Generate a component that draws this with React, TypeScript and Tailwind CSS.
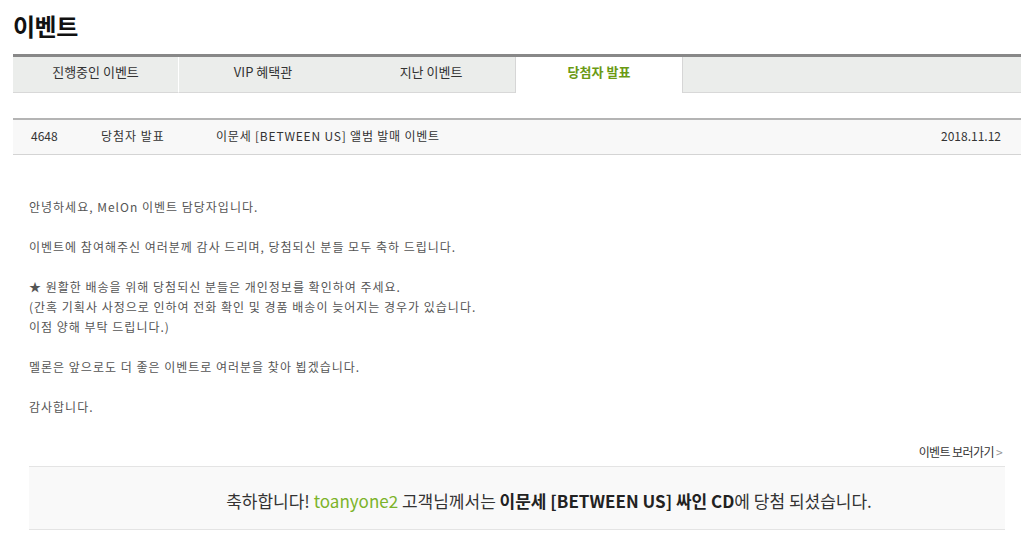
import React from "react";

const tabs = ["진행중인 이벤트", "VIP 혜택관", "지난 이벤트", "당첨자 발표"];

export default function App() {
  return (
    <div className="w-[1022px] h-[560px] bg-white overflow-hidden" style={{ fontFamily: '"Noto Sans CJK KR", "Noto Sans", sans-serif' }}>
      <div className="pl-[13px] pr-[1px]">
        <h1 className="pt-[9px] h-[54px] text-[24px] font-bold text-[#111] leading-[34px] tracking-[-0.5px]">이벤트</h1>
        <div className="flex border-t-[3px] border-[#888] h-[39px]">
          {tabs.map((t, i) => {
            const active = i === 3;
            return (
              <div
                key={t}
                className={
                  active
                    ? "w-[168px] flex items-center justify-center bg-white text-[13px] font-bold text-[#6a9a14] border-l border-r border-[#d6d6d6] pb-[7px]"
                    : i === 0
                    ? "w-[166px] flex items-center justify-center bg-[#ebedeb] text-[13px] text-[#333] border-b border-[#d8d8d8] border-r border-r-white pb-[6px]"
                    : "w-[168px] flex items-center justify-center bg-[#ebedeb] text-[13px] text-[#333] border-b border-[#d8d8d8] pb-[6px]"
                }
              >
                {t}
              </div>
            );
          })}
          <div className="flex-1 bg-[#ebedeb] border-b border-[#d8d8d8]" />
        </div>
        <div className="mt-[25px] border-t-[2px] border-[#b4b4b4] border-b border-b-[#d4d4d4] bg-[#f8f8f8] h-[37px] flex items-center text-[12px] text-[#333] pb-[3px]">
          <span className="pl-[18px] w-[88px]">4648</span>
          <span className="w-[115px] tracking-[1px]">당첨자 발표</span>
          <span className="flex-1 tracking-[0.8px]">이문세 [BETWEEN US] 앨범 발매 이벤트</span>
          <span className="pr-[20px]">2018.11.12</span>
        </div>
        <div className="pl-[16px] pr-[16px]">
          <div className="pt-[42px] text-[12px] leading-[20px] text-[#555] tracking-[1px]">
            <p>안녕하세요, MelOn 이벤트 담당자입니다.</p>
            <p className="mt-[20px]">이벤트에 참여해주신 여러분께 감사 드리며, 당첨되신 분들 모두 축하 드립니다.</p>
            <p className="mt-[20px]">★ 원활한 배송을 위해 당첨되신 분들은 개인정보를 확인하여 주세요.</p>
            <p>(간혹 기획사 사정으로 인하여 전화 확인 및 경품 배송이 늦어지는 경우가 있습니다.</p>
            <p>이점 양해 부탁 드립니다.)</p>
            <p className="mt-[20px]">멜론은 앞으로도 더 좋은 이벤트로 여러분을 찾아 뵙겠습니다.</p>
            <p className="mt-[20px]">감사합니다.</p>
          </div>
          <div className="mt-[25px] flex justify-end pr-[3px] text-[12px] leading-[20px] text-[#333] tracking-[-0.6px]">
            <span>이벤트 보러가기 <span className="text-[#999]">&gt;</span></span>
          </div>
          <div className="mt-[4px] border-t border-b border-[#e4e4e4] bg-[#f9f9f9] h-[64px] flex items-center justify-center text-[17px] text-[#333] pt-[6px] pl-[64px]">
            <span>
              축하합니다! <span className="text-[#7cb32a]">toanyone2</span> 고객님께서는{" "}
              <b className="text-[#222]">이문세 [BETWEEN US] 싸인 CD</b>에 당첨 되셨습니다.
            </span>
          </div>
        </div>
      </div>
    </div>
  );
}
